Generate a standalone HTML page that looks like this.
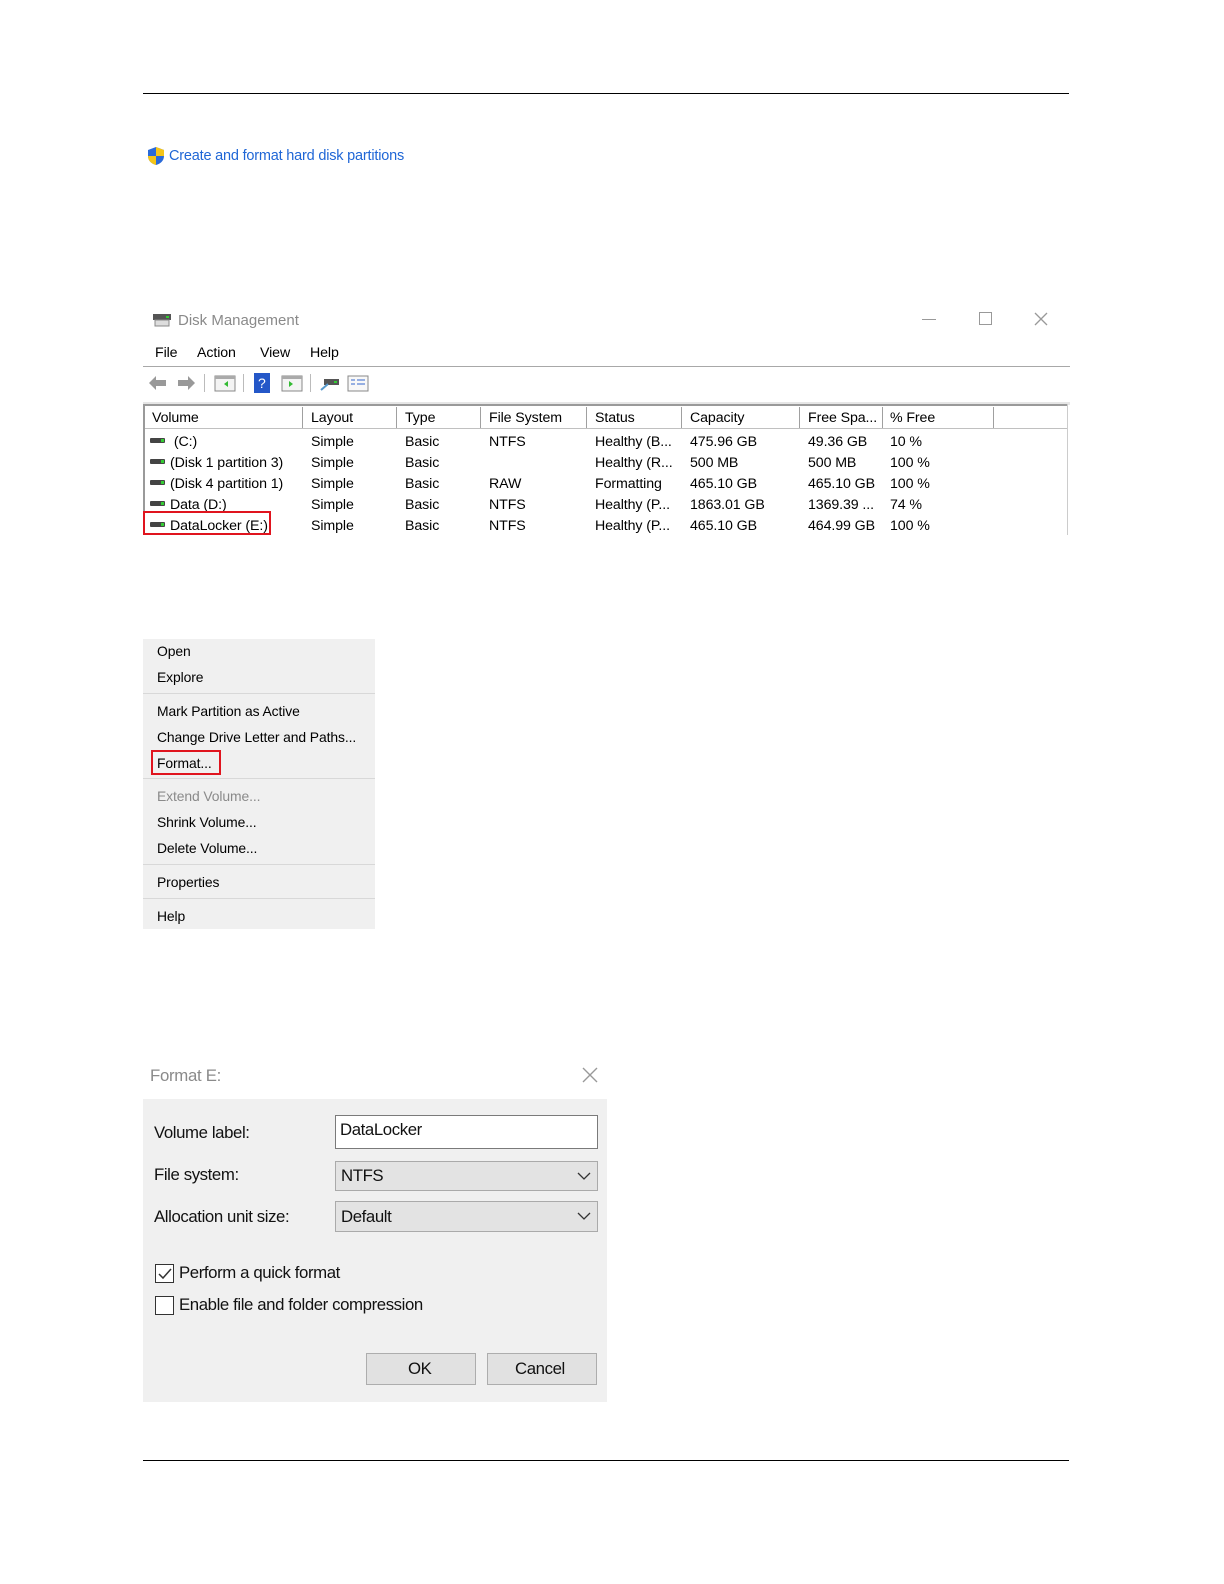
<!DOCTYPE html>
<html style="overflow:hidden"><head><meta charset="utf-8">
<style>
*{margin:0;padding:0;box-sizing:border-box}
html,body{width:1224px;height:1584px;overflow:hidden}
body{background:#fff;position:relative;font-family:"Liberation Sans",sans-serif;color:#000}
.a{position:absolute;white-space:nowrap}
.t{font-size:14.2px;letter-spacing:-0.1px}
.r{line-height:21px}
.hl{position:absolute;height:1px;background:#000}
.col{position:absolute;top:407px;height:21px;width:1px;background:#a0a0a0}
.disk{position:absolute;width:15px;height:5px;background:#444;border-radius:1px}
.disk:after{content:"";position:absolute;right:1px;top:1px;width:3px;height:3px;background:#3c3}
.m{position:absolute;left:157px;font-size:13.9px;letter-spacing:-0.1px}
.sep{position:absolute;left:143px;width:232px;height:1px;background:#d8d8d8}
.f{font-size:16.8px;letter-spacing:-0.4px;color:#111}
</style></head><body>
<div class="hl" style="left:143px;top:93px;width:926px"></div>
<div class="hl" style="left:143px;top:1460px;width:926px"></div>

<svg class="a" style="left:147px;top:146px" width="18" height="20" viewBox="0 0 18 20">
<path d="M9 1 L17 4 V10 C17 15 13 18 9 19 C5 18 1 15 1 10 V4 Z" fill="#2a6ad8"/>
<path d="M9 1 L17 4 V10 H9 Z" fill="#f5c518"/><path d="M9 10 H1 C1 15 5 18 9 19 Z" fill="#f5c518"/>
</svg>
<div class="a" style="left:169px;top:148px;font-size:14.5px;color:#1f66d6;letter-spacing:-0.2px">Create and format hard disk partitions</div>

<svg class="a" style="left:152px;top:311px" width="20" height="18"><rect x="1" y="3" width="18" height="6" fill="#555"/><rect x="14" y="5" width="3" height="2" fill="#3c3"/><rect x="3" y="9" width="14" height="6" fill="#ddd" stroke="#888"/></svg>
<div class="a" style="left:178px;top:312px;font-size:15px;color:#8a8a8a">Disk Management</div>
<div class="a" style="left:922px;top:319px;width:14px;height:1px;background:#999"></div>
<div class="a" style="left:979px;top:312px;width:13px;height:13px;border:1px solid #999"></div>
<svg class="a" style="left:1034px;top:312px" width="14" height="14"><path d="M1 1 L13 13 M13 1 L1 13" stroke="#999" stroke-width="1.3"/></svg>
<div class="a t" style="left:155px;top:345px">File</div>
<div class="a t" style="left:197px;top:345px">Action</div>
<div class="a t" style="left:260px;top:345px">View</div>
<div class="a t" style="left:310px;top:345px">Help</div>
<div class="a" style="left:143px;top:366px;width:927px;height:1px;background:#a8a8a8"></div>
<svg class="a" style="left:146px;top:372px" width="230" height="22">
<path d="M3 11 L10 4 V8 H20 V14 H10 V18 Z" fill="#999"/>
<path d="M49 11 L42 4 V8 H32 V14 H42 V18 Z" fill="#999"/>
<rect x="58" y="2" width="1" height="18" fill="#bbb"/>
<rect x="69" y="4" width="20" height="15" fill="#f4f4f4" stroke="#888"/><rect x="69" y="4" width="20" height="3" fill="#aaa"/><path d="M82 9 L78 12 L82 15 Z" fill="#3b3"/>
<rect x="97" y="2" width="1" height="18" fill="#bbb"/>
<rect x="108" y="1" width="16" height="20" fill="#2457c8"/><text x="112" y="16" fill="#fff" font-size="14" font-family="Liberation Sans">?</text>
<rect x="136" y="4" width="20" height="15" fill="#f4f4f4" stroke="#888"/><rect x="136" y="4" width="20" height="3" fill="#aaa"/><path d="M143 9 L147 12 L143 15 Z" fill="#3b3"/>
<rect x="164" y="2" width="1" height="18" fill="#bbb"/>
<rect x="178" y="7" width="15" height="6" fill="#555"/><rect x="188" y="9" width="3" height="2" fill="#3c3"/><path d="M175 18 L182 12" stroke="#59c" stroke-width="2"/>
<rect x="202" y="4" width="20" height="15" fill="#f8f8f8" stroke="#888"/><path d="M205 8 H209 M205 12 H209 M211 8 H219 M211 12 H219" stroke="#36c"/>
</svg>
<div class="a" style="left:143px;top:402px;width:927px;height:3px;background:#e6e6e6"></div>
<div class="a" style="left:143px;top:404px;width:925px;height:2px;background:#9a9a9a"></div>
<div class="a" style="left:143px;top:404px;width:2px;height:131px;background:#9a9a9a"></div>
<div class="a" style="left:1067px;top:404px;width:1px;height:131px;background:#ccc"></div>
<div class="a" style="left:145px;top:428px;width:922px;height:1px;background:#c0c0c0"></div>
<div class="col" style="left:302px"></div><div class="col" style="left:396px"></div><div class="col" style="left:480px"></div><div class="col" style="left:586px"></div><div class="col" style="left:681px"></div><div class="col" style="left:799px"></div><div class="col" style="left:882px"></div><div class="col" style="left:993px"></div>
<div class="a t" style="left:152px;top:410px">Volume</div>
<div class="a t" style="left:311px;top:410px">Layout</div>
<div class="a t" style="left:405px;top:410px">Type</div>
<div class="a t" style="left:489px;top:410px">File System</div>
<div class="a t" style="left:595px;top:410px">Status</div>
<div class="a t" style="left:690px;top:410px">Capacity</div>
<div class="a t" style="left:808px;top:410px">Free Spa...</div>
<div class="a t" style="left:890px;top:410px">% Free</div>

<div class="disk" style="left:150px;top:438px"></div>
<div class="disk" style="left:150px;top:459px"></div>
<div class="disk" style="left:150px;top:480px"></div>
<div class="disk" style="left:150px;top:501px"></div>
<div class="disk" style="left:150px;top:522px"></div>
<div class="a t r" style="left:170px;top:432px">&nbsp;(C:)<br>(Disk 1 partition 3)<br>(Disk 4 partition 1)<br>Data (D:)<br>DataLocker (E:)</div>
<div class="a" style="left:143px;top:511px;width:128px;height:24px;border:2px solid #e0141e"></div>

<div class="a t r" style="left:311px;top:432px">Simple<br>Simple<br>Simple<br>Simple<br>Simple</div>
<div class="a t r" style="left:405px;top:432px">Basic<br>Basic<br>Basic<br>Basic<br>Basic</div>
<div class="a t r" style="left:489px;top:432px">NTFS<br>&nbsp;<br>RAW<br>NTFS<br>NTFS</div>
<div class="a t r" style="left:595px;top:432px">Healthy (B...<br>Healthy (R...<br>Formatting<br>Healthy (P...<br>Healthy (P...</div>
<div class="a t r" style="left:690px;top:432px">475.96 GB<br>500 MB<br>465.10 GB<br>1863.01 GB<br>465.10 GB</div>
<div class="a t r" style="left:808px;top:432px">49.36 GB<br>500 MB<br>465.10 GB<br>1369.39 ...<br>464.99 GB</div>
<div class="a t r" style="left:890px;top:432px">10 %<br>100 %<br>100 %<br>74 %<br>100 %</div>

<div class="a" style="left:143px;top:639px;width:232px;height:290px;background:#f0f0f0"></div>
<div class="m" style="top:643px">Open</div>
<div class="m" style="top:669px">Explore</div>
<div class="sep" style="top:693px"></div>
<div class="m" style="top:703px">Mark Partition as Active</div>
<div class="m" style="top:729px">Change Drive Letter and Paths...</div>
<div class="m" style="top:755px">Format...</div>
<div class="a" style="left:151px;top:750px;width:70px;height:25px;border:2px solid #e0141e"></div>
<div class="sep" style="top:778px"></div>
<div class="m" style="top:788px;color:#8a8a8a">Extend Volume...</div>
<div class="m" style="top:814px">Shrink Volume...</div>
<div class="m" style="top:840px">Delete Volume...</div>
<div class="sep" style="top:864px"></div>
<div class="m" style="top:874px">Properties</div>
<div class="sep" style="top:898px"></div>
<div class="m" style="top:908px">Help</div>

<div class="a" style="left:150px;top:1066px;font-size:16.8px;color:#8a8a8a;letter-spacing:-0.3px">Format E:</div>
<svg class="a" style="left:582px;top:1067px" width="16" height="16"><path d="M1 1 L15 15 M15 1 L1 15" stroke="#999" stroke-width="1.4"/></svg>
<div class="a" style="left:143px;top:1099px;width:464px;height:303px;background:#f0f0f0"></div>
<div class="a f" style="left:154px;top:1123px">Volume label:</div>
<div class="a" style="left:335px;top:1115px;width:263px;height:34px;background:#fff;border:1px solid #7a7a7a"></div>
<div class="a f" style="left:340px;top:1120px">DataLocker</div>
<div class="a f" style="left:154px;top:1165px">File system:</div>
<div class="a" style="left:335px;top:1161px;width:263px;height:30px;background:#e3e3e3;border:1px solid #aaa"></div>
<div class="a f" style="left:341px;top:1166px">NTFS</div>
<svg class="a" style="left:577px;top:1172px" width="14" height="9"><path d="M1 1 L7 7 L13 1" stroke="#333" fill="none" stroke-width="1.3"/></svg>
<div class="a f" style="left:154px;top:1207px">Allocation unit size:</div>
<div class="a" style="left:335px;top:1201px;width:263px;height:31px;background:#e3e3e3;border:1px solid #aaa"></div>
<div class="a f" style="left:341px;top:1207px">Default</div>
<svg class="a" style="left:577px;top:1212px" width="14" height="9"><path d="M1 1 L7 7 L13 1" stroke="#333" fill="none" stroke-width="1.3"/></svg>
<div class="a" style="left:155px;top:1264px;width:19px;height:19px;border:1px solid #333;background:#fff"></div>
<svg class="a" style="left:157px;top:1266px" width="16" height="16"><path d="M2 8 L6 12 L14 3" stroke="#333" fill="none" stroke-width="1.5"/></svg>
<div class="a f" style="left:179px;top:1263px">Perform a quick format</div>
<div class="a" style="left:155px;top:1296px;width:19px;height:19px;border:1px solid #333;background:#fff"></div>
<div class="a f" style="left:179px;top:1295px">Enable file and folder compression</div>
<div class="a" style="left:366px;top:1353px;width:110px;height:32px;background:#e1e1e1;border:1px solid #adadad"></div>
<div class="a f" style="left:408px;top:1359px">OK</div>
<div class="a" style="left:487px;top:1353px;width:110px;height:32px;background:#e1e1e1;border:1px solid #adadad"></div>
<div class="a f" style="left:515px;top:1359px">Cancel</div>
</body></html>
